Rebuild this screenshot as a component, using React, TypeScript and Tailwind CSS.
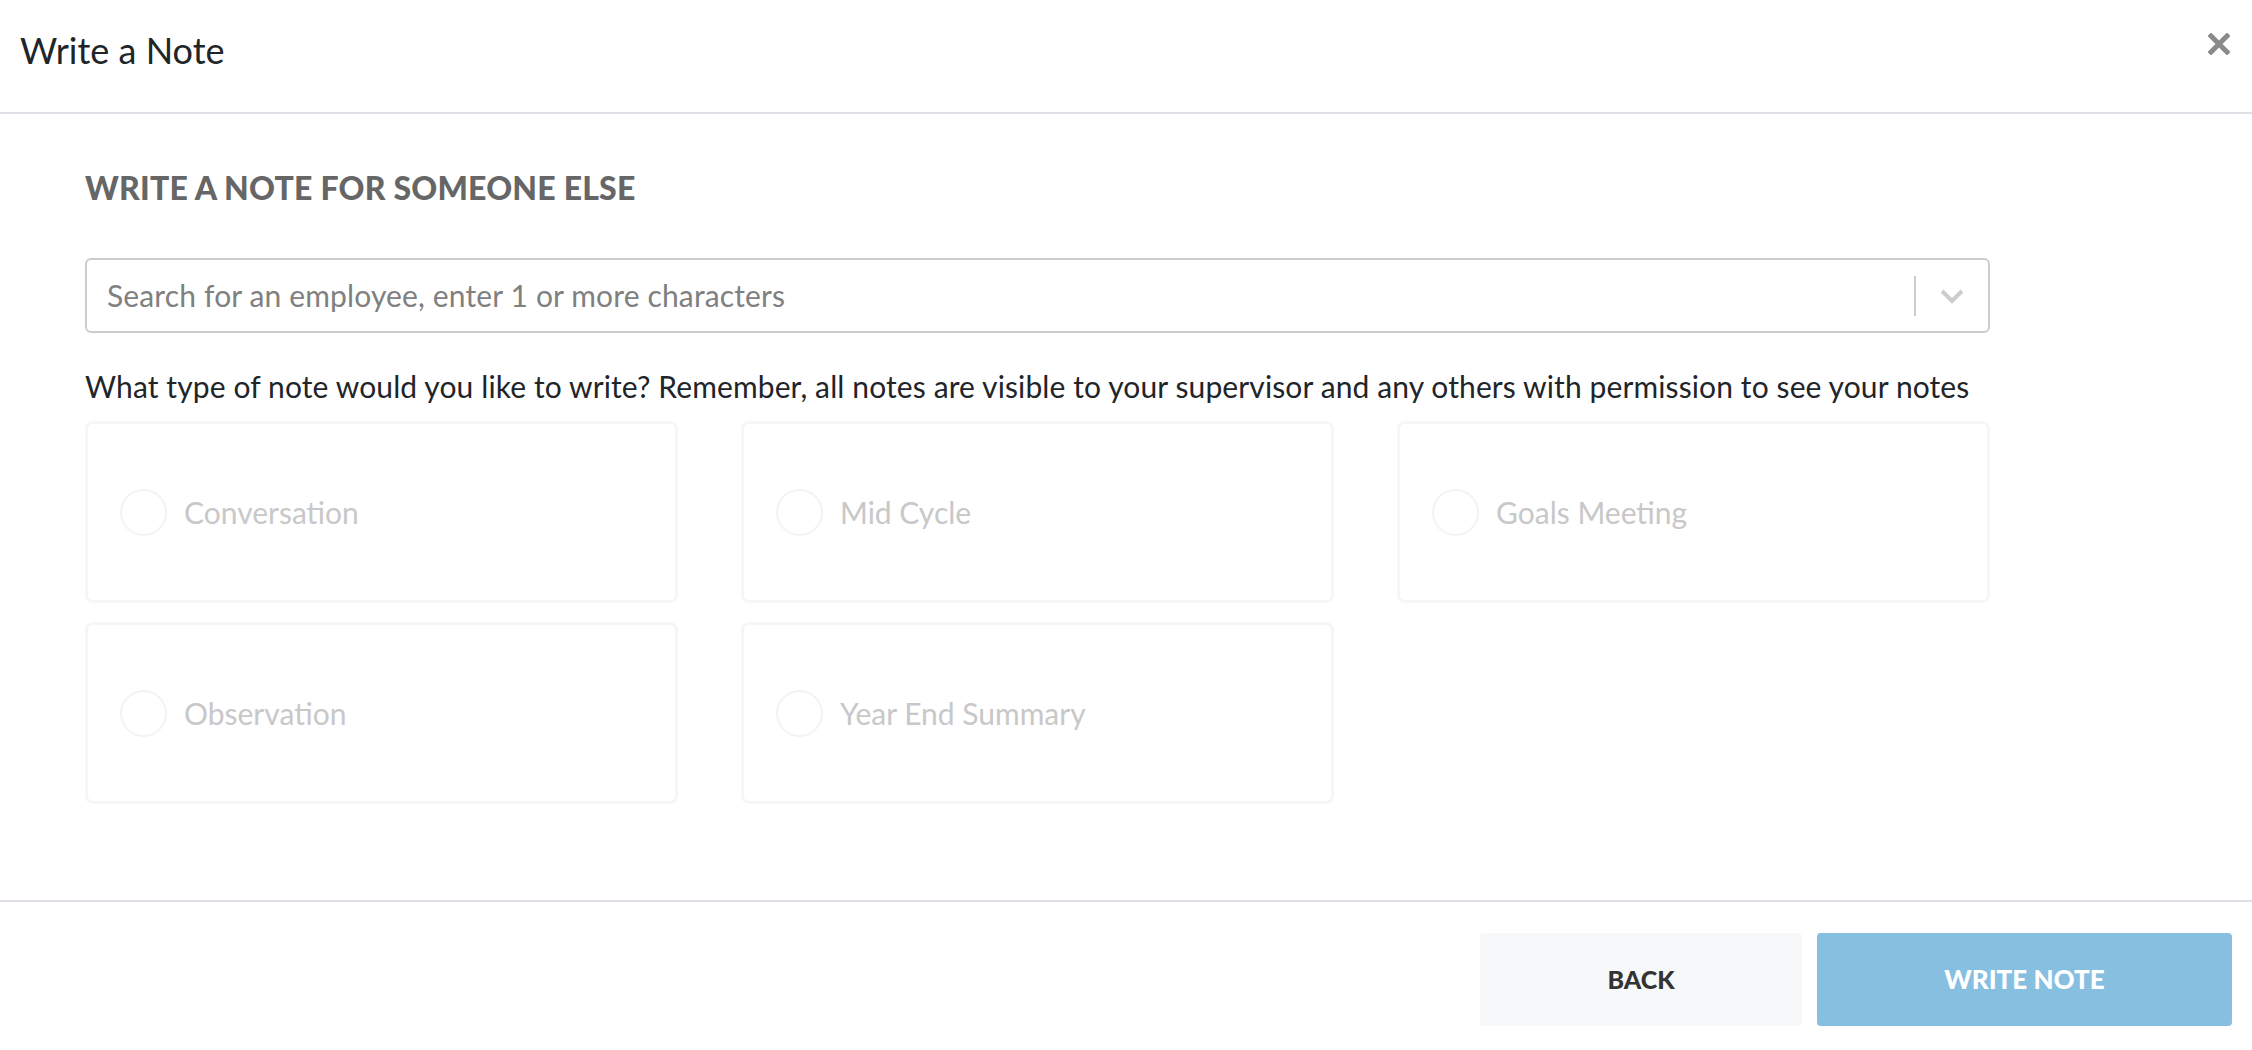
import React from "react";

const cards = ["Conversation", "Mid Cycle", "Goals Meeting", "Observation", "Year End Summary"];

export default function App() {
  return (
    <div className="w-[2252px] h-[1050px] bg-white flex flex-col overflow-hidden" style={{ fontFamily: "Lato, 'Noto Sans', sans-serif" }}>
      <header className="h-[114px] border-b-2 border-[#dee2e6] flex items-start justify-between pl-[20px] pr-[22px] shrink-0">
        <h1 className="pt-[27px] text-[36px] leading-[46px] text-[#212529] font-normal">Write a Note</h1>
        <button className="mt-[33px] w-[22px] h-[22px]" aria-label="Close">
          <svg width="22" height="22" viewBox="0 0 22 22">
            <path d="M3 3 L19 19 M19 3 L3 19" stroke="#8a8a8a" strokeWidth="5" strokeLinecap="square" />
          </svg>
        </button>
      </header>

      <main className="flex-1 px-[85px] pt-[56px]">
        <h2 className="text-[32px] leading-[36px] font-black text-[#666666] tracking-[0.2px]">WRITE A NOTE FOR SOMEONE ELSE</h2>

        <div className="mt-[52px] w-[1905px] h-[75px] border-2 border-[#cccccc] rounded-[6px] flex items-center">
          <div className="flex-1 pl-[20px] text-[30px] tracking-[0.14px] text-[#808080]">Search for an employee, enter 1 or more characters</div>
          <div className="w-[2px] h-[40px] bg-[#cccccc]" />
          <div className="w-[72px] h-full flex items-center justify-center">
            <svg width="24" height="16" viewBox="0 0 24 16">
              <path d="M2 3 L12 13 L22 3" stroke="#cccccc" strokeWidth="4" fill="none" />
            </svg>
          </div>
        </div>

        <p className="mt-[35px] text-[30px] leading-[36px] tracking-[0.11px] text-[#212529]">
          What type of note would you like to write? Remember, all notes are visible to your supervisor and any others with permission to see your notes
        </p>

        <div className="mt-[17px] grid grid-cols-[593px_593px_593px] gap-x-[63px] gap-y-[19px]">
          {cards.map((c) => (
            <div key={c} className="h-[182px] border-[3px] border-[#f5f6f7] rounded-[8px] flex items-center pl-[32px]">
              <div className="w-[47px] h-[47px] rounded-full border-2 border-[#f3f3f3]" />
              <span className="ml-[17px] text-[30px] text-[#c8c8c8]">{c}</span>
            </div>
          ))}
        </div>
      </main>

      <footer className="h-[150px] border-t-2 border-[#dee2e6] flex justify-end items-start pt-[31px] pr-[20px] gap-[15px] shrink-0">
        <button className="w-[322px] h-[93px] rounded-[4px] bg-[#f7f8fa] text-[#333333] text-[25px] font-black">BACK</button>
        <button className="w-[415px] h-[93px] rounded-[4px] bg-[#87bfe0] text-white text-[26px] font-black">WRITE NOTE</button>
      </footer>
    </div>
  );
}
